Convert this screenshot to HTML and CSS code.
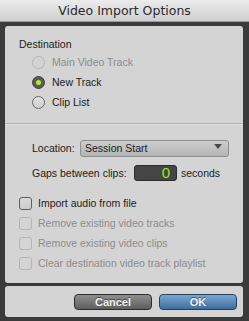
FILE: index.html
```html
<!DOCTYPE html>
<html>
  <head>
    <title>Video Import Options</title>
    <link rel="stylesheet" href="styles.css">
  </head>
  <body>
    <div class="titlebar">Video Import Options</div>
    <div class="frame">
      <div class="panel main">
        <div class="heading">Destination</div>
        <div class="row radio-row disabled">
          <span class="radio"></span>
          <span>Main Video Track</span>
        </div>
        <div class="row radio-row">
          <span class="radio on"></span>
          <span>New Track</span>
        </div>
        <div class="row radio-row">
          <span class="radio"></span>
          <span>Clip List</span>
        </div>

        <div class="divider"></div>

        <div class="row field-row location">
          <span class="label">Location:</span>
          <div class="select">
            <span>Session Start</span>
            <span class="arrow"></span>
          </div>
        </div>
        <div class="row field-row">
          <span class="label gaps-label">Gaps between clips:</span>
          <div class="number">0</div>
          <span class="unit">seconds</span>
        </div>

        <div class="checks">
          <div class="row check-row">
            <span class="box"></span>
            <span>Import audio from file</span>
          </div>
          <div class="row check-row disabled">
            <span class="box"></span>
            <span>Remove existing video tracks</span>
          </div>
          <div class="row check-row disabled">
            <span class="box"></span>
            <span>Remove existing video clips</span>
          </div>
          <div class="row check-row disabled">
            <span class="box"></span>
            <span>Clear destination video track playlist</span>
          </div>
        </div>
      </div>
      <div class="panel footer">
        <button type="button" class="btn cancel">Cancel</button>
        <button type="button" class="btn ok">OK</button>
      </div>
    </div>
  </body>
</html>
```

FILE: styles.css
```css
body {
  margin: 0;
  width: 249px;
  height: 321px;
  background-color: #3a3a3a;
  font-family: "Liberation Sans", Arial, sans-serif;
  font-size: 10.5px;
  color: #1c1c1c;
  overflow: hidden;
}

.titlebar {
  height: 22px;
  line-height: 22px;
  text-align: center;
  font-family: "DejaVu Sans", sans-serif;
  font-size: 12.5px;
  color: #2a2a2a;
  background: linear-gradient(#ececec, #cfcfcf);
  border-bottom: 1px solid #9a9a9a;
  box-sizing: border-box;
}

.frame {
  padding: 4px 6px 0 5px;
  display: flex;
  flex-direction: column;
  gap: 3px;
}

.panel {
  background-color: #d4d4d4;
  border-radius: 3px;
}

.main {
  height: 257px;
  box-sizing: border-box;
  padding-top: 10px;
}

.heading {
  height: 16px;
  line-height: 16px;
  padding-left: 14px;
}

.row {
  display: flex;
  align-items: center;
  height: 20px;
}

.disabled {
  color: #8c8c8c;
}

.radio-row {
  padding-left: 27px;
  gap: 7px;
}

.radio {
  width: 11px;
  height: 11px;
  border-radius: 50%;
  border: 1px solid #6a6a6a;
  background: linear-gradient(#e2e2e2, #cfcfcf);
  display: flex;
  align-items: center;
  justify-content: center;
}

.disabled .radio {
  border-color: #b4b4b4;
  background: #d4d4d4;
}

.radio.on {
  background: #5a5a5a;
  border-color: #3e3e3e;
}

.radio.on::after {
  content: "";
  width: 5px;
  height: 5px;
  border-radius: 50%;
  background-color: #b6ec1e;
}

.divider {
  margin: 11px 0 13px;
  height: 1px;
  background-color: #b3b3b3;
  border-bottom: 1px solid #e0e0e0;
}

.field-row {
  padding-left: 27px;
}

.location {
  margin-bottom: 5px;
}

.label {
  width: 48px;
}

.gaps-label {
  width: 102px;
}

.select {
  width: 149px;
  height: 17px;
  box-sizing: border-box;
  border: 1px solid #8e8e8e;
  border-radius: 3px;
  background: linear-gradient(#cdcdcd, #b5b5b5);
  display: flex;
  align-items: center;
  justify-content: space-between;
  padding: 0 6px 0 4px;
  color: #1c1c1c;
}

.arrow {
  width: 0;
  height: 0;
  border-left: 4px solid transparent;
  border-right: 4px solid transparent;
  border-top: 5px solid #4a4a4a;
  margin-top: -4px;
}

.number {
  width: 43px;
  height: 16px;
  box-sizing: border-box;
  background-color: #454545;
  border: 1px solid #2c2c2c;
  border-radius: 3px;
  color: #9ee51a;
  font-size: 15px;
  line-height: 14px;
  text-align: right;
  padding-right: 6px;
}

.unit {
  margin-left: 4px;
}

.checks {
  margin-top: 10px;
}

.check-row {
  padding-left: 14px;
  gap: 6px;
}

.box {
  width: 11px;
  height: 11px;
  border: 1px solid #5e5e5e;
  border-radius: 3px;
  background: linear-gradient(#dadada, #cdcdcd);
}

.disabled .box {
  border-color: #b5b5b5;
  background: #d4d4d4;
}

.footer {
  height: 31px;
  display: flex;
  justify-content: flex-end;
  align-items: center;
  gap: 7px;
  padding-right: 6px;
  padding-top: 1px;
  box-sizing: border-box;
}

.btn {
  width: 78px;
  height: 16px;
  border-radius: 4px;
  border: 1px solid #2e2e2e;
  font-family: "Liberation Sans", Arial, sans-serif;
  font-size: 11px;
  font-weight: bold;
  color: #f4f4f4;
  text-shadow: 0 -1px 0 rgba(0, 0, 0, 0.5);
  padding: 0;
  cursor: pointer;
}

.cancel {
  background: linear-gradient(#8e8e8e, #5e5e5e);
}

.ok {
  border-color: #23405e;
  background: linear-gradient(#7aa6d2, #3f6e9e);
}
```
